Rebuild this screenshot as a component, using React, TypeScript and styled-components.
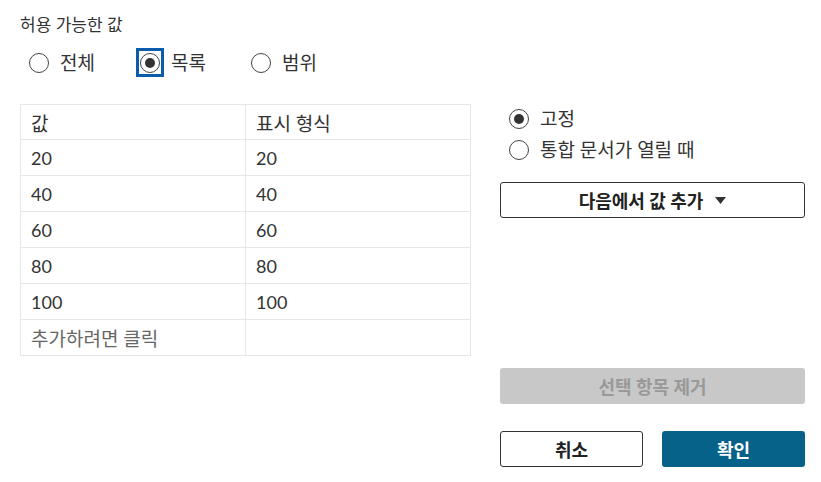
import React from "react";
import styled, { createGlobalStyle } from "styled-components";

const Global = createGlobalStyle`
  html, body { margin: 0; padding: 0; background: #fff; }
  body { font-family: Lato, "Noto Sans CJK KR", sans-serif; color: #333; }
`;

const Page = styled.div`
  width: 821px;
  height: 482px;
  box-sizing: border-box;
  padding: 13px 16px 0 20px;
`;

const Title = styled.div`
  font-size: 17px;
  line-height: 24px;
  color: #333;
`;

const RadioRow = styled.div`
  display: flex;
  margin-top: 10px;
  margin-left: 5px;
`;

const RadioItem = styled.label<{ $width?: number }>`
  display: flex;
  align-items: center;
  gap: 7px;
  width: ${(p) => (p.$width ? `${p.$width}px` : "auto")};
  height: 31px;
  line-height: 31px;
  font-size: 19px;
  color: #333;
`;

const RadioBox = styled.span<{ $focus?: boolean }>`
  width: 28px;
  height: 29px;
  box-sizing: border-box;
  display: flex;
  align-items: center;
  justify-content: center;
  border: 3px solid ${(p) => (p.$focus ? "#0b5cab" : "transparent")};
`;

const Circle = styled.span<{ $checked?: boolean }>`
  width: 20px;
  height: 20px;
  box-sizing: border-box;
  border-radius: 50%;
  border: 1px solid #444;
  background: #fff;
  display: flex;
  align-items: center;
  justify-content: center;
  &::after {
    content: "";
    display: ${(p) => (p.$checked ? "block" : "none")};
    width: 10px;
    height: 10px;
    border-radius: 50%;
    background: #333;
  }
`;

const Main = styled.div`
  display: grid;
  grid-template-columns: 451px 305px;
  column-gap: 29px;
  margin-top: 26px;
`;

const Table = styled.div`
  display: grid;
  grid-template-columns: 225px 225px;
  border-top: 1px solid #e6e6e6;
  border-left: 1px solid #e6e6e6;
  align-self: start;
`;

const Cell = styled.div<{ $muted?: boolean; $num?: boolean }>`
  height: 36px;
  box-sizing: border-box;
  border-right: 1px solid #e6e6e6;
  border-bottom: 1px solid #e6e6e6;
  padding: 0 10px;
  display: flex;
  align-items: center;
  font-size: ${(p) => (p.$num ? "18px" : "19px")};
  color: ${(p) => (p.$muted ? "#666" : "#333")};
`;

const HeadCell = styled(Cell)`
  height: 35px;
`;

const Side = styled.div`
  display: flex;
  flex-direction: column;
`;

const SideRadios = styled.div`
  display: flex;
  flex-direction: column;
  margin-left: 5px;
  margin-top: -1px;
`;

const OutlineButton = styled.button`
  height: 36px;
  box-sizing: border-box;
  border: 1px solid #333;
  border-radius: 3px;
  background: #fff;
  color: #222;
  font-family: inherit;
  font-size: 18px;
  font-weight: 700;
  display: flex;
  align-items: center;
  justify-content: center;
  gap: 12px;
  padding: 0;
  cursor: pointer;
`;

const AddButton = styled(OutlineButton)`
  margin-top: 17px;
`;

const DisabledButton = styled.button`
  margin-top: 150px;
  height: 36px;
  border: none;
  border-radius: 3px;
  background: #c8c8c8;
  color: #999;
  font-family: inherit;
  font-size: 18px;
  font-weight: 700;
`;

const Footer = styled.div`
  display: grid;
  grid-template-columns: 143px 143px;
  justify-content: space-between;
  margin-top: 27px;
`;

const PrimaryButton = styled.button`
  height: 36px;
  border: none;
  border-radius: 3px;
  background: #07628a;
  color: #fff;
  font-family: inherit;
  font-size: 18px;
  font-weight: 700;
  cursor: pointer;
`;

const Caret = () => (
  <svg width="11" height="7" viewBox="0 0 11 7">
    <path d="M0 0 L11 0 L5.5 7 Z" fill="#333" />
  </svg>
);

const rows = ["20", "40", "60", "80", "100"];

export default function App() {
  return (
    <Page>
      <Global />
      <Title>허용 가능한 값</Title>
      <RadioRow>
        <RadioItem $width={111}>
          <RadioBox>
            <Circle />
          </RadioBox>
          전체
        </RadioItem>
        <RadioItem $width={111}>
          <RadioBox $focus>
            <Circle $checked />
          </RadioBox>
          목록
        </RadioItem>
        <RadioItem>
          <RadioBox>
            <Circle />
          </RadioBox>
          범위
        </RadioItem>
      </RadioRow>
      <Main>
        <Table>
          <HeadCell>값</HeadCell>
          <HeadCell>표시 형식</HeadCell>
          {rows.map((r) => (
            <React.Fragment key={r}>
              <Cell $num>{r}</Cell>
              <Cell $num>{r}</Cell>
            </React.Fragment>
          ))}
          <Cell $muted>추가하려면 클릭</Cell>
          <Cell />
        </Table>
        <Side>
          <SideRadios>
            <RadioItem>
              <RadioBox>
                <Circle $checked />
              </RadioBox>
              고정
            </RadioItem>
            <RadioItem>
              <RadioBox>
                <Circle />
              </RadioBox>
              통합 문서가 열릴 때
            </RadioItem>
          </SideRadios>
          <AddButton>
            다음에서 값 추가 <Caret />
          </AddButton>
          <DisabledButton disabled>선택 항목 제거</DisabledButton>
          <Footer>
            <OutlineButton>취소</OutlineButton>
            <PrimaryButton>확인</PrimaryButton>
          </Footer>
        </Side>
      </Main>
    </Page>
  );
}
